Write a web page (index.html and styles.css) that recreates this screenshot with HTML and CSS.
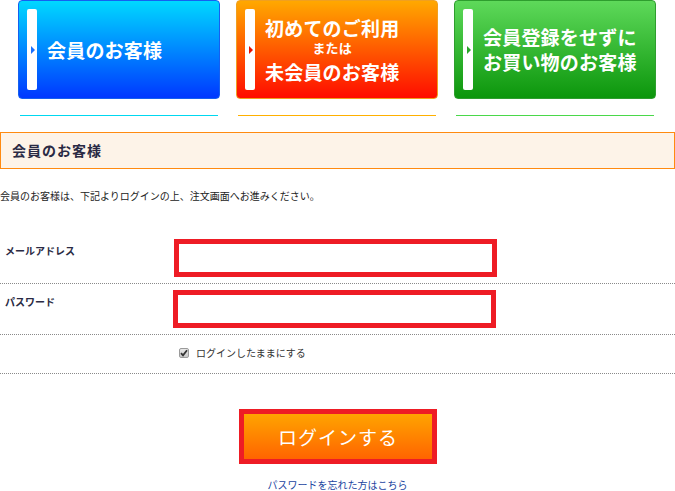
FILE: index.html
```html
<!DOCTYPE html>
<html lang="ja">
<head>
<meta charset="utf-8">
<title>ログイン</title>
<link rel="stylesheet" href="styles.css">
</head>
<body>
<nav class="tabs">
  <div class="tab">
    <a class="tab-btn tab-blue" href="#">
      <span class="bar"><span class="tri"></span></span>
      <span class="tab-text">会員のお客様</span>
    </a>
    <div class="tab-line"></div>
  </div>
  <div class="tab">
    <a class="tab-btn tab-orange" href="#">
      <span class="bar"><span class="tri"></span></span>
      <span class="tab-text center">
        <span class="l1">初めてのご利用</span>
        <span class="l2">または</span>
        <span class="l3">未会員のお客様</span>
      </span>
    </a>
    <div class="tab-line"></div>
  </div>
  <div class="tab">
    <a class="tab-btn tab-green" href="#">
      <span class="bar"><span class="tri"></span></span>
      <span class="tab-text">会員登録をせずに<br>お買い物のお客様</span>
    </a>
    <div class="tab-line"></div>
  </div>
</nav>

<h2 class="section-head">会員のお客様</h2>
<p class="desc">会員のお客様は、下記よりログインの上、注文画面へお進みください。</p>

<form class="login-form">
  <div class="row row-mail">
    <label class="label">メールアドレス</label>
    <div class="input"></div>
  </div>
  <div class="row row-pass">
    <label class="label">パスワード</label>
    <div class="input"></div>
  </div>
  <div class="row row-check">
    <span class="label"></span>
    <span class="check-wrap">
      <span class="checkbox"><svg width="8" height="8" viewBox="0 0 8 8"><path d="M1 4.2 L3 6.3 L7 1.3" fill="none" stroke="#333" stroke-width="1.8"/></svg></span>
      <span class="check-text">ログインしたままにする</span>
    </span>
  </div>
  <div class="submit-wrap">
    <button type="button" class="submit">ログインする</button>
  </div>
  <p class="forgot"><a href="#">パスワードを忘れた方はこちら</a></p>
</form>
</body>
</html>
```
FILE: styles.css
```css
* { box-sizing: border-box; }
html, body { margin: 0; padding: 0; background: #fff; }
body {
  font-family: "Noto Sans CJK JP", "Noto Sans", sans-serif;
  color: #222;
  width: 675px;
  overflow: hidden;
}

.tabs {
  display: flex;
  gap: 16px;
  padding-left: 18px;
}
.tab { width: 202px; }
.tab-btn {
  display: flex;
  align-items: stretch;
  height: 99px;
  padding: 8px;
  border-radius: 4px;
  border: 1px solid;
  text-decoration: none;
  color: #fff;
}
.tab-blue { background: linear-gradient(#00d8ff, #0038ff); border-color: #1560f0; }
.tab-orange { background: linear-gradient(#ffa800, #ff0c00); border-color: #f0a020; }
.tab-green { background: linear-gradient(#5ed95a, #0c960c); border-color: #2e9e2e; }

.bar {
  width: 10px;
  flex: none;
  background: #fff;
  border-radius: 2px;
  display: flex;
  align-items: center;
  padding-left: 4px;
}
.tri {
  width: 0; height: 0;
  border-top: 4px solid transparent;
  border-bottom: 4px solid transparent;
  border-left: 4px solid #1a70ff;
}
.tab-orange .tri { border-left-color: #e81000; }
.tab-green .tri { border-left-color: #2aa52a; }

.tab-text {
  margin-left: 10px;
  align-self: center;
  font-size: 19px;
  font-weight: 700;
  line-height: 25px;
  white-space: nowrap;
  letter-spacing: 0.2px;
  margin-top: -2px;
}
.tab-blue .tab-text { margin-top: -1px; }
.tab-text.center {
  text-align: center;
  display: flex;
  flex-direction: column;
  margin-top: 0;
}
.l1, .l3 { line-height: 22px; }
.l2 { font-size: 13px; line-height: 18px; }
.l3 { margin-top: 4px; }

.tab-line { height: 1px; margin: 16px 2px 0; }
.tab:nth-child(1) .tab-line { background: #00d8f0; }
.tab:nth-child(2) .tab-line { background: #ffb000; }
.tab:nth-child(3) .tab-line { background: #4ad84a; }

.section-head {
  margin: 16px 0 0;
  height: 37px;
  border: 1px solid #ff8a10;
  background: #fdf3e8;
  font-size: 14px;
  font-weight: 700;
  letter-spacing: 1px;
  color: #2a2a44;
  line-height: 35px;
  padding-left: 11px;
}

.desc {
  margin: 20px 0 0;
  font-size: 10px;
  line-height: 14px;
  color: #222;
}

.login-form { margin-top: 26px; }
.row {
  display: flex;
  align-items: flex-start;
  border-bottom: 1px dotted #8a8a8a;
}
.row-mail { padding: 10px 0 6px; }
.row-pass { padding: 6px 0 6px; }
.row-check { padding: 12px 0 14px; align-items: center; }
.label {
  width: 174px;
  flex: none;
  padding-left: 5px;
  margin-top: 6px;
  font-size: 10px;
  font-weight: 700;
  line-height: 12px;
  color: #2a2a44;
}
.row-check .label { margin-top: 0; }
.row-pass .label { width: 173px; }
.input {
  width: 323px;
  height: 38px;
  border: 5px solid #ee1c25;
  background: #fff;
}
.check-wrap {
  display: flex;
  align-items: center;
  padding-left: 5px;
  gap: 7px;
}
.checkbox {
  width: 10px; height: 10px;
  border: 1px solid #9a9a9a;
  border-radius: 2px;
  background: linear-gradient(#e8e8e8, #c8c8c8);
  display: flex;
  align-items: center;
  justify-content: center;
}
.check-text { font-size: 10px; line-height: 12px; color: #333; }

.submit-wrap { display: flex; justify-content: center; margin-top: 35px; }
.submit {
  width: 198px;
  height: 55px;
  border: 5px solid #ee1c25;
  background: linear-gradient(#ffa400, #ff6400);
  color: #fff;
  font-family: inherit;
  font-size: 19px;
  letter-spacing: 1px;
  padding: 0;
  margin-left: 1px;
}
.forgot {
  margin: 14px 0 0;
  text-align: center;
  font-size: 10px;
  line-height: 14px;
}
.forgot a { color: #1a44a0; text-decoration: none; }
```
